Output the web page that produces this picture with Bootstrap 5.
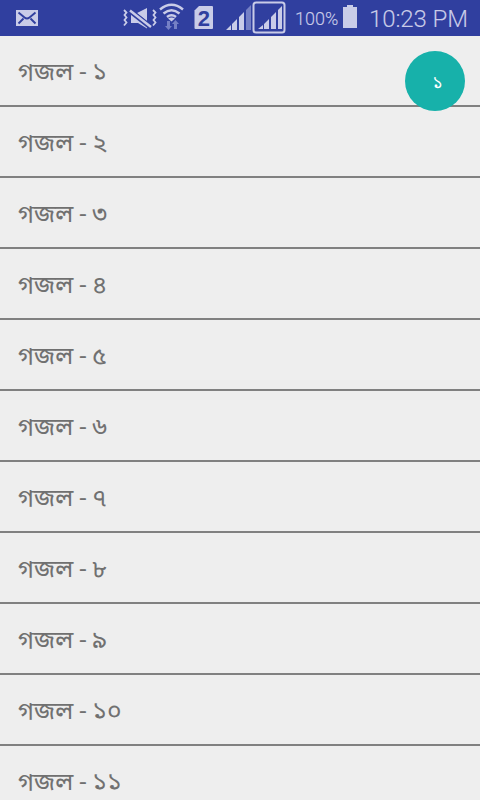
<!DOCTYPE html>
<html lang="bn">
<head>
<meta charset="utf-8">
<meta name="viewport" content="width=device-width, initial-scale=1">
<title>গজল</title>
<link href="https://cdn.jsdelivr.net/npm/bootstrap@5.3.0/dist/css/bootstrap.min.css" rel="stylesheet">
<style>
body{background:#eee;height:800px;font-family:Roboto,"Noto Sans Bengali","Noto Sans",sans-serif}
.statusbar{height:36px;background:#303f9f;color:#c9cce8;padding-right:13px}
.statusbar svg{flex:none}
.battery-text{font-size:18px;line-height:36px;width:43px;margin-left:9px;padding-top:1px;font-weight:300;-webkit-text-stroke:.15px #c9cce8}
.clock{font-size:24px;line-height:36px;width:98px;margin-left:11px;padding-top:1px;font-weight:300;letter-spacing:-.1px;-webkit-text-stroke:.1px #c9cce8}
.ghazals{height:764px}
.ghazals>.ghazal.list-group-item{height:71px;flex:none;background:#eee;border:0;border-bottom:2px solid #808080;padding:1px 18px 0;color:#707070;font-size:24.700px;line-height:69px;white-space:nowrap;-webkit-text-stroke:.1px #707070}
.bubble{top:51px;right:15px;width:60px;height:60px;background:#17b1aa;font-size:17px;padding:4px 0 0 5px;z-index:2}
</style>
</head>
<body class="position-relative overflow-hidden">
<header class="statusbar d-flex">
<svg width="286" height="36" viewBox="0 0 286 36" fill="#c9cce8">
<path d="M16 10h22v16H16z"/>
<path d="M18.500 12.500l6 5q2.500 2 5 0l6-5M18.500 23.500l5-5M35.500 23.500l-5-5" fill="none" stroke="#303f9f" stroke-width="1.900"/>
<path d="M137 13l10-5v13zM131 14l16 12.500v2l-9-5.500h-7z"/>
<path d="M129.500 10.500l21.500 17" stroke="#303f9f" stroke-width="5"/>
<path d="M130 10.500l21 16.500" stroke="#c9cce8" stroke-width="2.400"/>
<path d="M124 10l2.500 2.500-2 2.500 2 2.500-2 2.500 2 2.500-2.500 3M153 10l2.500 2.500-2 2.500 2 2.500-2 2.500 2 2.500-2.500 3" fill="none" stroke="#c9cce8" stroke-width="1.800"/>
<path d="M160 9.500Q171.500 0 183 9.500M163.500 13.500Q171.500 7 179.500 13.500M167 17Q171.500 13.500 176 17" fill="none" stroke="#c9cce8" stroke-width="2.500"/>
<path d="M168 18.500q3.500-2 7 0l-3.500 3z"/>
<path d="M167 21h3v5h2l-3.500 4-3.500-4h2zM174 29h3v-5h2l-3.500-4-3.500 4h2z" fill="#7580c5"/>
<path d="M199 6h13a1 1 0 0 1 1 1v21a1 1 0 0 1-1 1h-16.500a1 1 0 0 1-1-1V10.500z"/>
<text x="197.800" y="25.500" font-family="Liberation Sans,sans-serif" font-weight="700" font-size="22" fill="#303f9f">2</text>
<path d="M226 30l5-5v5zM232 24l5-5v11h-5zM239 17l5-5v18h-5z"/>
<path d="M246 10l5-5v25h-5z" fill="#7580c5"/>
<rect x="253.500" y="2.500" width="31" height="30" rx="2.500" fill="none" stroke="#c9cce8" stroke-width="2"/>
<path d="M258 29l5-4v4zM264 24l5-5v10h-5zM271 17l5-5v17h-5zM278 10l4-4v23h-4z"/>
</svg>
<span class="battery-text text-nowrap">100%</span>
<svg class="ms-1" width="16" height="36" viewBox="0 0 16 36"><path d="M1 7h4V5h6v2h4v21H1z" fill="#c9cce8"/></svg>
<span class="clock text-nowrap">10:23 PM</span>
</header>
<main class="ghazals list-group list-group-flush overflow-hidden">
<div class="ghazal list-group-item">গজল - ১</div>
<div class="ghazal list-group-item">গজল - ২</div>
<div class="ghazal list-group-item">গজল - ৩</div>
<div class="ghazal list-group-item">গজল - ৪</div>
<div class="ghazal list-group-item">গজল - ৫</div>
<div class="ghazal list-group-item">গজল - ৬</div>
<div class="ghazal list-group-item">গজল - ৭</div>
<div class="ghazal list-group-item">গজল - ৮</div>
<div class="ghazal list-group-item">গজল - ৯</div>
<div class="ghazal list-group-item">গজল - ১০</div>
<div class="ghazal list-group-item">গজল - ১১</div>
</main>
<div class="bubble position-absolute rounded-circle d-flex align-items-center justify-content-center text-white">১</div>
</body>
</html>
